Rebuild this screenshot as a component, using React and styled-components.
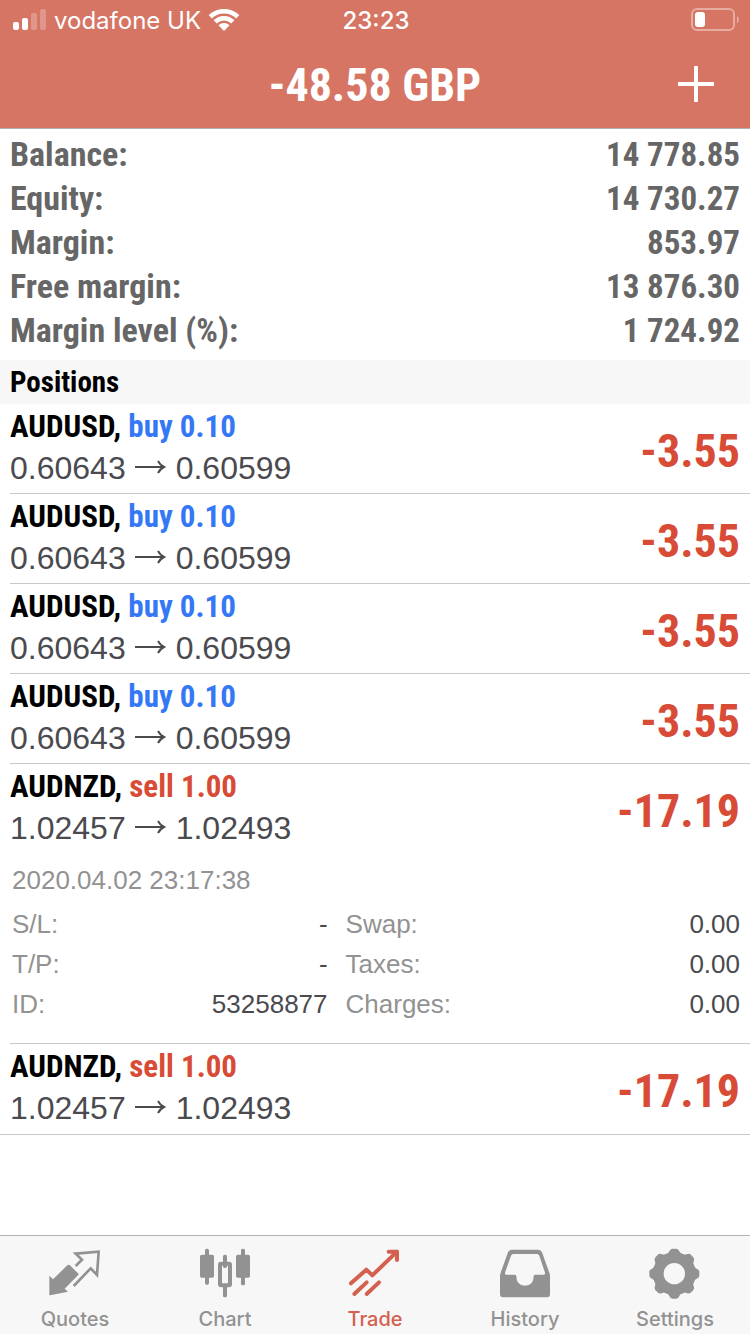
import { useState } from "react";
import styled, { createGlobalStyle } from "styled-components";

const GlobalStyle = createGlobalStyle`
    * {
        box-sizing: border-box;
    }

    body {
        margin: 0;
        background: #fff;
        font-family: "Liberation Sans", Arial, sans-serif;
    }

    button {
        border: 0;
        padding: 0;
        background: none;
        color: inherit;
        font: inherit;
        text-align: left;
        cursor: pointer;
    }
`

const condensed = `
    font-family: "Roboto Condensed", "Arial Narrow", sans-serif;
    font-weight: bold;
`

const Screen = styled.div`
    display: flex;
    flex-direction: column;
    min-height: 100vh;
`

const Header = styled.header`
    background: #d67564;
    border-bottom: 1px solid #b2aeac;
    color: #fff;
`

const StatusBar = styled.div`
    display: grid;
    grid-template-columns: 1fr auto 1fr;
    align-items: center;
    height: 40px;
    padding: 0 11px 0 13px;
    font-family: Inter, sans-serif;
    font-size: 24px;
`

const Carrier = styled.div`
    display: flex;
    align-items: center;
    gap: 8px;
`

const Clock = styled.time`
    font-weight: 500;
`

const Battery = styled.div`
    display: flex;
    justify-content: flex-end;
`

const TitleBar = styled.div`
    display: grid;
    grid-template-columns: 1fr auto 1fr;
    align-items: center;
    height: 88px;
    padding: 0 36px;
`

const Title = styled.h1`
    grid-column: 2;
    margin: 0;
    padding-top: 2px;
    ${condensed}
    font-size: 46px;
    line-height: 56px;
`

const AddButton = styled.button`
    justify-self: end;
    display: flex;
`

const Summary = styled.dl`
    margin: 0;
    padding: 3px 10px 8px;
    ${condensed}
    font-size: 34px;
    line-height: 44px;
    color: #666;
`

const SummaryRow = styled.div`
    display: flex;
    justify-content: space-between;
    align-items: baseline;
    height: 44px;
`

const Value = styled.dd`
    margin: 0;
`

const Amount = styled(Value)`
    font-size: 33px;
`

const SectionTitle = styled.h2`
    margin: 0;
    padding: 0 10px;
    background: #f7f7f7;
    ${condensed}
    font-size: 29px;
    line-height: 44px;
`

const PositionList = styled.ul`
    margin: 0;
    padding: 0 0 1px;
    list-style: none;
    border-bottom: 1px solid #c8c7cc;
`

const PositionItem = styled.li`
    margin-left: 10px;

    & + & {
        border-top: 1px solid #c8c7cc;
    }
`

const PositionButton = styled.button`
    display: flex;
    justify-content: space-between;
    align-items: center;
    width: 100%;
    padding: 3px 10px 3px 0;
`

const Deal = styled.div`
    ${condensed}
    font-size: 31px;
    line-height: 40px;
    color: #000;
`

const Side = styled.span`
    color: ${(props) => (props.$side === "buy" ? "#3478f6" : "#d84b36")};
`

const Prices = styled.div`
    display: flex;
    align-items: center;
    gap: 9px;
    font-size: 32px;
    line-height: 43px;
    color: #4a4a4f;
`

const Profit = styled.div`
    padding-top: 4px;
    ${condensed}
    font-size: 46px;
    line-height: 56px;
    color: #d84b36;
`

const Details = styled.div`
    padding: 7px 10px 19px 2px;
    font-size: 26px;
    line-height: 40px;
    color: #929292;
`

const DetailGrid = styled.dl`
    display: grid;
    grid-template-columns: 4fr 5fr;
    column-gap: 18px;
    margin: 4px 0 0;
`

const DetailRow = styled.div`
    display: flex;
    justify-content: space-between;

    dd {
        color: #4a4a4f;
    }
`

const TabBar = styled.nav`
    display: flex;
    margin-top: auto;
    border-top: 1px solid #b2b2b2;
    background: #f7f7f7;
`

const Tab = styled.a`
    flex: 1;
    display: flex;
    flex-direction: column;
    align-items: center;
    gap: 6px;
    padding: 12px 0 2px;
    color: ${(props) => (props.$active ? "#d4604f" : "#929292")};
    font-family: Inter, sans-serif;
    font-size: 20px;
    font-weight: 500;
    line-height: 26px;
    text-decoration: none;
`

const TabIcon = styled.svg`
    width: 52px;
    height: 52px;
    fill: currentColor;
`

function SignalIcon() {
    return (
        <svg width="33" height="22" viewBox="0 0 33 22" fill="#fff">
            <rect x="0" y="13" width="6" height="8" rx="2" />
            <rect x="9" y="9" width="6" height="12" rx="2" />
            <rect x="18" y="4" width="6" height="17" rx="2" opacity="0.25" />
            <rect x="27" y="0" width="6" height="21" rx="2" opacity="0.25" />
        </svg>
    )
}

function WifiIcon() {
    return (
        <svg width="30" height="22" viewBox="0 0 30 22" fill="none" stroke="#fff" strokeWidth="4.6">
            <path d="M1.300 7.800a19.700 19.700 0 0 1 27.400 0" />
            <path d="M6.200 12.900a12.600 12.600 0 0 1 17.600 0" />
            <path d="M15 22l-5.500-5.700a8 8 0 0 1 11 0z" fill="#fff" stroke="none" />
        </svg>
    )
}

function BatteryIcon() {
    return (
        <svg width="48" height="24" viewBox="0 0 48 24">
            <rect x="1" y="1" width="42" height="21" rx="5" fill="none" stroke="#fff" strokeOpacity="0.4" strokeWidth="2" />
            <rect x="4" y="4" width="10" height="15" rx="3" fill="#fff" />
            <path d="M46 8c2.500 1.500 2.500 6 0 7z" fill="#fff" opacity="0.4" />
        </svg>
    )
}

function PlusIcon() {
    return (
        <svg width="36" height="36" viewBox="0 0 36 36" stroke="#fff" strokeWidth="4">
            <path d="M18 0v36M0 18h36" />
        </svg>
    )
}

function ArrowIcon() {
    return (
        <svg width="32" height="18" viewBox="0 0 32 18" fill="none" stroke="currentColor" strokeWidth="2" role="img" aria-label="to">
            <path d="M0 7h29M23 1q2 4 6 6-4 2-6 6" />
        </svg>
    )
}

function QuotesIcon() {
    return (
        <TabIcon viewBox="0 0 156 156">
            <path d="M1 83l11 11 43-42q4-4 8 0l24 24q3 3 0 6l-40 40 10 9-54 11q-2 0-2-2z" />
            <path d="M80 54l19-19-19-18 69-6-5 70-19-20-51 53" fill="none" stroke="currentColor" strokeWidth="8" />
        </TabIcon>
    )
}

function ChartIcon() {
    return (
        <TabIcon viewBox="0 0 156 156">
            <rect x="18" y="2" width="12" height="108" rx="5" />
            <rect x="3" y="20" width="42" height="69" rx="5" />
            <rect x="72" y="20" width="12" height="40" rx="5" />
            <rect x="72" y="110" width="12" height="38" rx="5" />
            <rect x="63" y="47" width="30" height="65" rx="3" fill="none" stroke="currentColor" strokeWidth="12" />
            <rect x="126" y="2" width="12" height="110" rx="5" />
            <rect x="111" y="20" width="42" height="69" rx="5" />
        </TabIcon>
    )
}

function TradeIcon() {
    return (
        <TabIcon viewBox="0 0 156 156">
            <g fill="none" stroke="currentColor" strokeWidth="12" strokeLinecap="round" strokeLinejoin="round">
                <path d="M6 106l46-41 18 17 74-71M119 11h25v25" />
                <path d="M16 138l37-35M53 138l37-35" />
            </g>
        </TabIcon>
    )
}

function HistoryIcon() {
    return (
        <TabIcon viewBox="0 0 156 156">
            <path
                fillRule="evenodd"
                d="M38 5h80q8 0 11 8l22 61q2 5 2 10v55q0 9-9 9H12q-9 0-9-9V84q0-5 2-10L27 13q3-8 11-8zM43 18q-5 0-7 5L18 74q-2 6 4 6h26q4 0 4 5 0 28 26 28t26-28q0-5 4-5h26q6 0 4-6l-17-51q-2-5-7-5z"
            />
        </TabIcon>
    )
}

function SettingsIcon() {
    return (
        <TabIcon viewBox="0 0 156 156">
            <circle cx="76" cy="77" r="48" fill="none" stroke="currentColor" strokeWidth="32" />
            {[0, 45, 90, 135, 180, 225, 270, 315].map((angle) => (
                <path
                    key={angle}
                    transform={`rotate(${angle} 76 77)`}
                    d="M51 19q7-2 10-9 3-8 9-8h12q6 0 9 8 3 7 10 9z"
                />
            ))}
        </TabIcon>
    )
}

const account = [
    ["Balance:", "14 778.85"],
    ["Equity:", "14 730.27"],
    ["Margin:", "853.97"],
    ["Free margin:", "13 876.30"],
    ["Margin level (%):", "1 724.92"],
]

const audusd = { symbol: "AUDUSD", side: "buy", volume: "0.10", open: "0.60643", current: "0.60599", profit: "-3.55" }
const audnzd = { symbol: "AUDNZD", side: "sell", volume: "1.00", open: "1.02457", current: "1.02493", profit: "-17.19" }

const positions = [
    { id: 1, ...audusd },
    { id: 2, ...audusd },
    { id: 3, ...audusd },
    { id: 4, ...audusd },
    {
        id: 5,
        ...audnzd,
        time: "2020.04.02 23:17:38",
        details: [
            ["S/L:", "-"],
            ["Swap:", "0.00"],
            ["T/P:", "-"],
            ["Taxes:", "0.00"],
            ["ID:", "53258877"],
            ["Charges:", "0.00"],
        ],
    },
    { id: 6, ...audnzd },
]

const tabs = [
    { label: "Quotes", icon: QuotesIcon },
    { label: "Chart", icon: ChartIcon },
    { label: "Trade", icon: TradeIcon },
    { label: "History", icon: HistoryIcon },
    { label: "Settings", icon: SettingsIcon },
]

function Position({ position, open, onToggle }) {
    return (
        <PositionItem>
            <PositionButton type="button" aria-expanded={open} onClick={onToggle}>
                <div>
                    <Deal>
                        {position.symbol}, <Side $side={position.side}>{position.side} {position.volume}</Side>
                    </Deal>
                    <Prices>
                        <span>{position.open}</span>
                        <ArrowIcon />
                        <span>{position.current}</span>
                    </Prices>
                </div>
                <Profit>{position.profit}</Profit>
            </PositionButton>
            {open && position.details && (
                <Details>
                    <time>{position.time}</time>
                    <DetailGrid>
                        {position.details.map(([label, value]) => (
                            <DetailRow key={label}>
                                <dt>{label}</dt>
                                <Value>{value}</Value>
                            </DetailRow>
                        ))}
                    </DetailGrid>
                </Details>
            )}
        </PositionItem>
    )
}

export default function App() {
    const [openId, setOpenId] = useState(5)
    const [active, setActive] = useState("Trade")

    return (
        <Screen>
            <GlobalStyle />
            <Header>
                <StatusBar>
                    <Carrier>
                        <SignalIcon />
                        <span>vodafone UK</span>
                        <WifiIcon />
                    </Carrier>
                    <Clock>23:23</Clock>
                    <Battery>
                        <BatteryIcon />
                    </Battery>
                </StatusBar>
                <TitleBar>
                    <Title>-48.58 GBP</Title>
                    <AddButton type="button" aria-label="New order">
                        <PlusIcon />
                    </AddButton>
                </TitleBar>
            </Header>
            <main>
                <Summary>
                    {account.map(([label, value]) => (
                        <SummaryRow key={label}>
                            <dt>{label}</dt>
                            <Amount>{value}</Amount>
                        </SummaryRow>
                    ))}
                </Summary>
                <SectionTitle>Positions</SectionTitle>
                <PositionList>
                    {positions.map((position) => (
                        <Position
                            key={position.id}
                            position={position}
                            open={openId === position.id}
                            onToggle={() => setOpenId(openId === position.id ? null : position.id)}
                        />
                    ))}
                </PositionList>
            </main>
            <TabBar>
                {tabs.map(({ label, icon: Icon }) => (
                    <Tab
                        key={label}
                        href={`#${label.toLowerCase()}`}
                        $active={active === label}
                        aria-current={active === label ? "page" : undefined}
                        onClick={() => setActive(label)}
                    >
                        <Icon />
                        <span>{label}</span>
                    </Tab>
                ))}
            </TabBar>
        </Screen>
    )
}
